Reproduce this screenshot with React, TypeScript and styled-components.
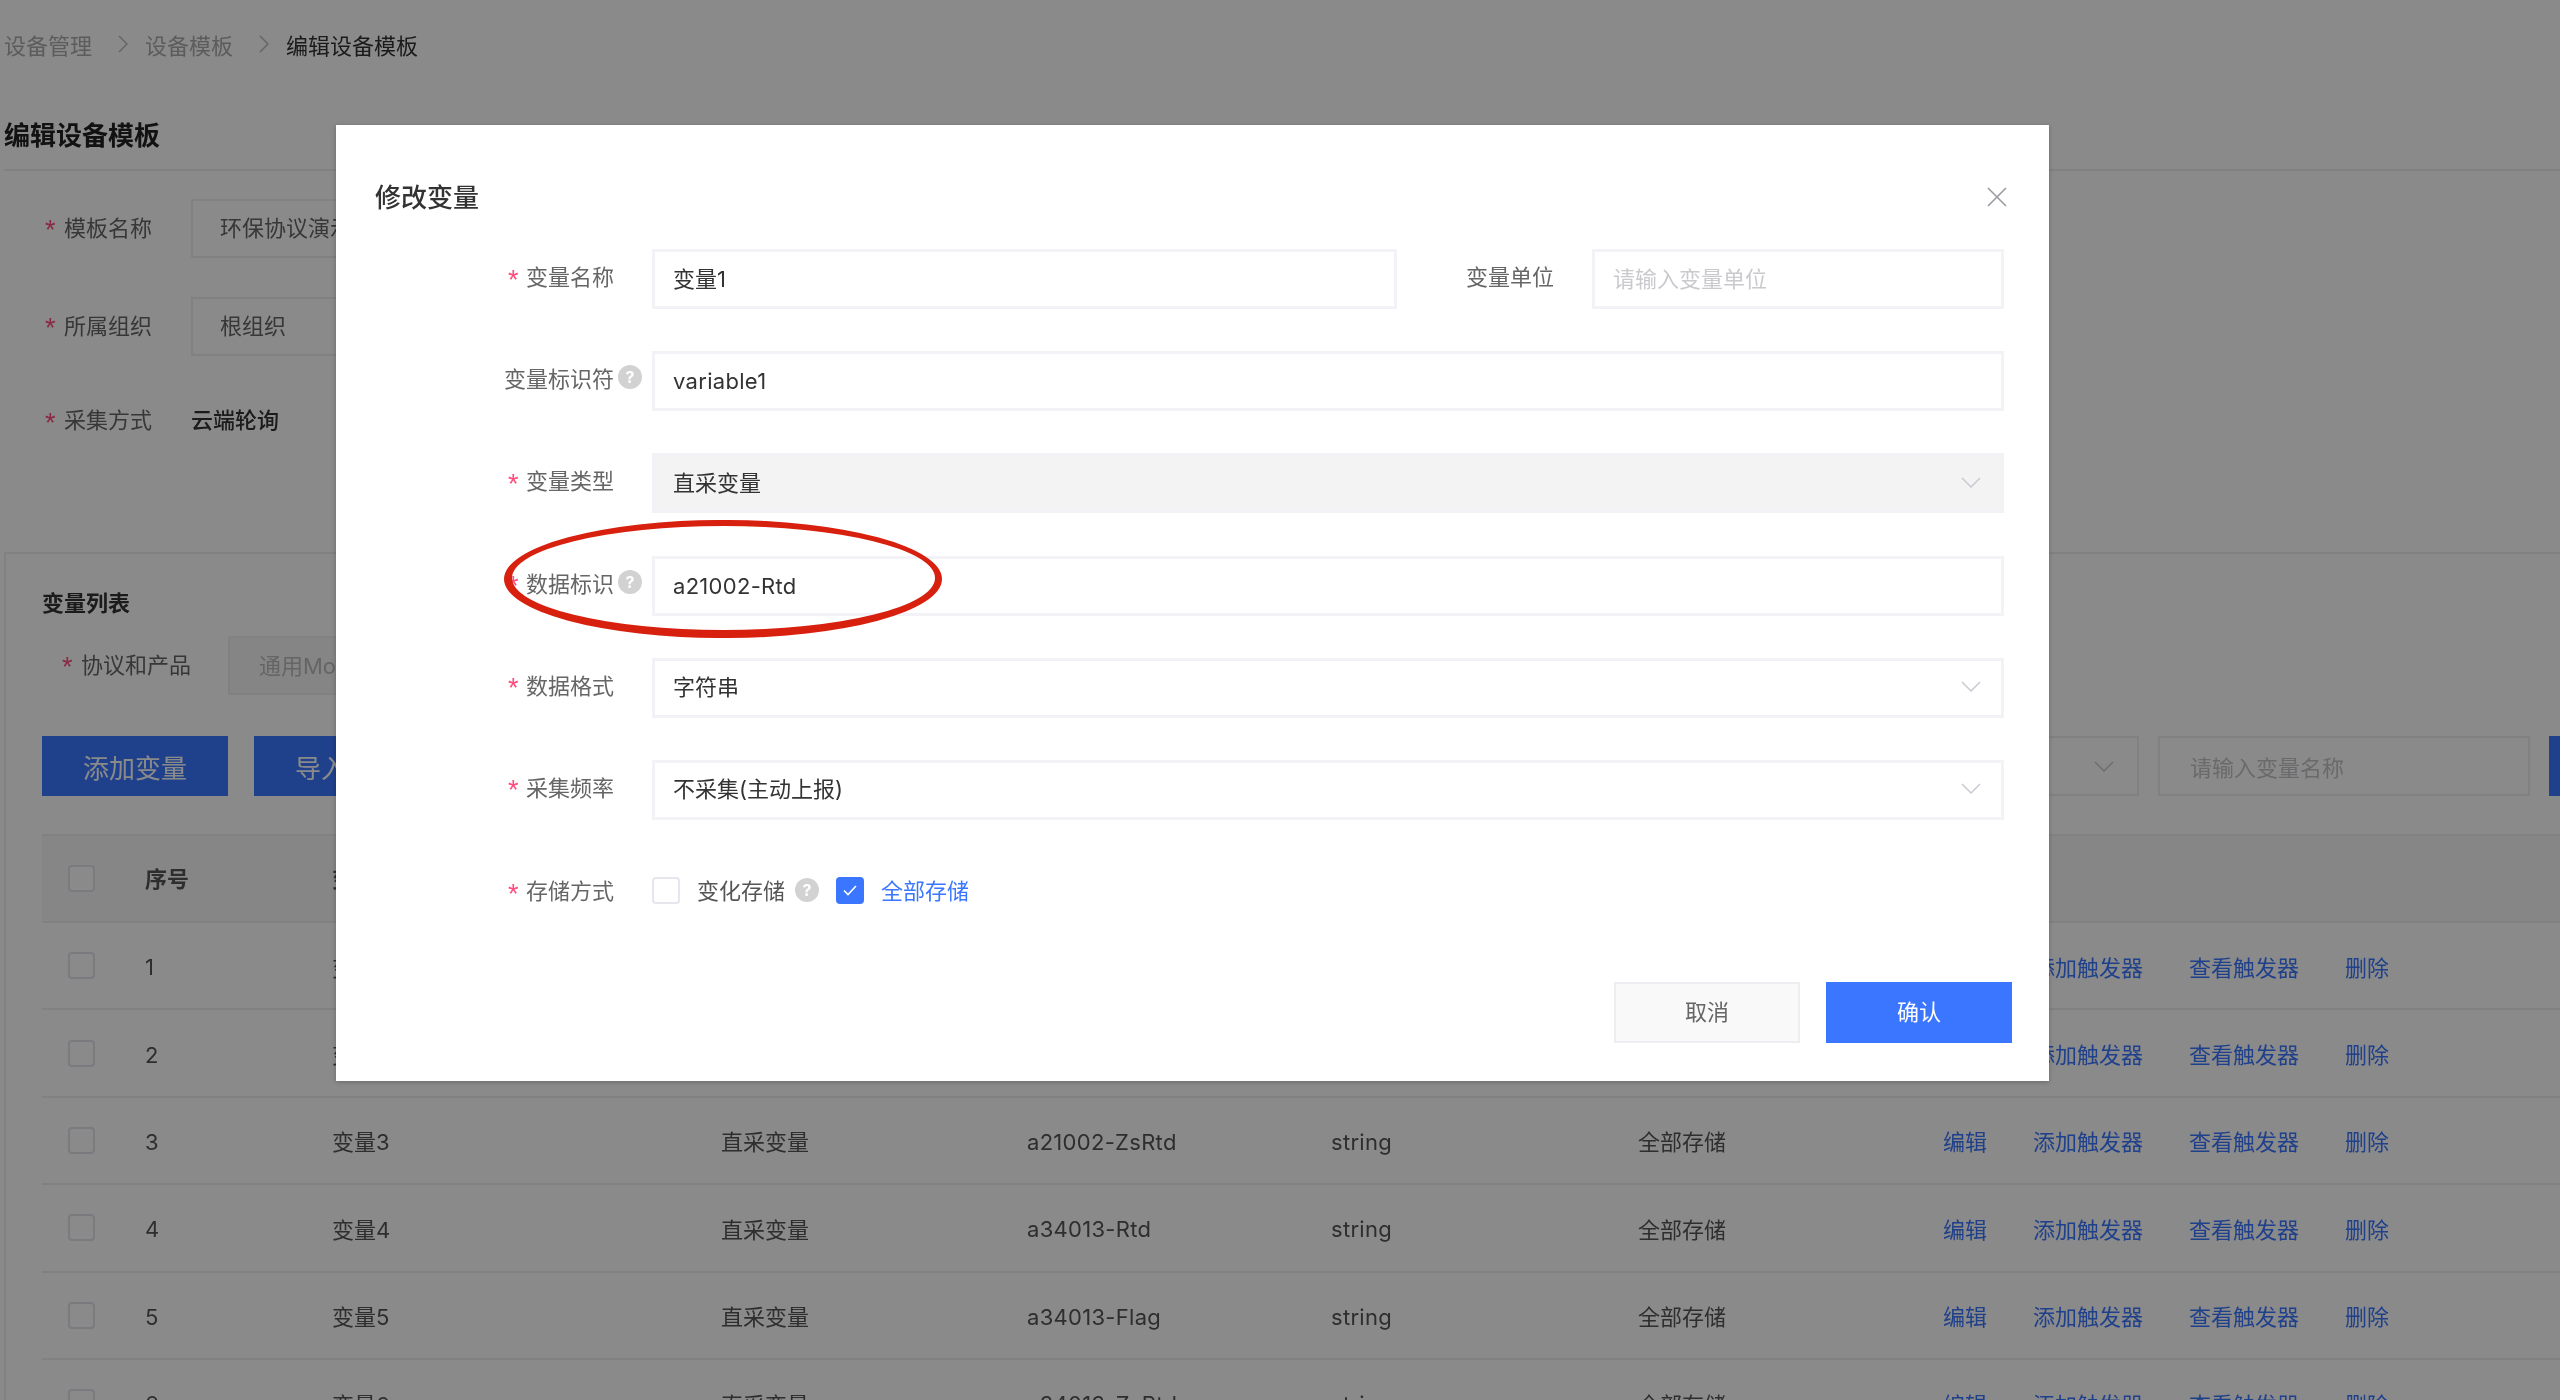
import React from "react";
import styled, { createGlobalStyle } from "styled-components";

const GlobalStyle = createGlobalStyle`
  html, body {
    margin: 0;
    width: 2560px;
    height: 1400px;
    overflow: hidden;
    background: #fff;
    font-family: Inter, "Noto Sans CJK SC", sans-serif;
    font-size: 22px;
    color: #333;
  }
  * {
    box-sizing: border-box;
  }
`;

const BLUE = "#3a76ff";

const Page = styled.div`
  width: 2560px;
  height: 1400px;
  overflow: hidden;
  padding-left: 4px;
  white-space: nowrap;
  filter: blur(0.6px);
`;

const Breadcrumb = styled.div`
  height: 90px;
  padding-bottom: 3px;
  display: flex;
  align-items: center;
  color: #999;
`;

const Crumb = styled.span<{ $current?: boolean }>`
  color: ${(p) => (p.$current ? "#333" : "#aaa")};
`;

const CrumbSep = styled.svg`
  width: 10px;
  height: 18px;
  margin: 0 17px 0 26px;
  fill: none;
  stroke: #bbb;
  stroke-width: 1.5;
`;

const Heading = styled.h1`
  margin: 0;
  height: 81px;
  padding-top: 8px;
  display: flex;
  align-items: center;
  font-size: 26px;
  font-weight: 600;
  color: #222;
  border-bottom: 2px solid #eeeef2;
`;

const BaseForm = styled.div`
  padding: 28px 0 0 41px;
  display: flex;
  flex-direction: column;
  gap: 39px;
`;

const BaseRow = styled.div<{ $short?: boolean }>`
  height: ${(p) => (p.$short ? "52px" : "59px")};
  display: flex;
  align-items: center;
`;

const BaseLabel = styled.div`
  width: 146px;
  padding-bottom: 6px;
  color: #666;
  display: flex;
  align-items: center;
`;

const Star = styled.span`
  width: 19px;
  padding-top: 10px;
  font-family: "Liberation Sans", sans-serif;
  font-size: 27px;
  line-height: 1;
  color: #ff4d7d;
`;

const BaseInput = styled.div`
  width: 520px;
  height: 100%;
  padding: 0 0 6px 27px;
  display: flex;
  align-items: center;
  color: #666;
  border: 2px solid #eeeef2;
`;

const BaseValue = styled.div`
  padding-bottom: 6px;
  font-weight: 500;
  color: #333;
`;

const Panel = styled.section`
  margin-top: 105px;
  height: 900px;
  padding: 34px 0 0 36px;
  border: 2px solid #eeeef2;
  border-right: none;
`;

const PanelTitle = styled.h2`
  margin: 0;
  height: 30px;
  line-height: 30px;
  font-size: 22px;
  font-weight: 600;
  color: #333;
`;

const ProtocolRow = styled.div`
  margin-top: 18px;
  height: 59px;
  padding-left: 20px;
  display: flex;
  align-items: center;
`;

const ProtocolLabel = styled.div`
  width: 166px;
  padding-bottom: 6px;
  color: #666;
  display: flex;
  align-items: center;
`;

const ProtocolInput = styled.div`
  width: 500px;
  height: 100%;
  padding: 0 0 3px 29px;
  display: flex;
  align-items: center;
  color: #bbb;
  background: #f5f5f5;
  border: 2px solid #eeeef2;
`;

const Toolbar = styled.div`
  margin-top: 41px;
  height: 60px;
  display: flex;
`;

const PrimaryButton = styled.button`
  flex: none;
  width: 186px;
  height: 60px;
  margin-right: 26px;
  padding: 0;
  border: none;
  background: ${BLUE};
  color: #fff;
  font: inherit;
  font-size: 26px;
`;

const FilterSelect = styled.div`
  flex: none;
  width: 239px;
  margin-left: 1434px;
  padding-right: 23px;
  display: flex;
  align-items: center;
  justify-content: flex-end;
  border: 2px solid #eeeef2;
`;

const SearchInput = styled.div`
  flex: none;
  width: 372px;
  margin: 0 19px;
  padding-left: 30px;
  display: flex;
  align-items: center;
  color: #c4c4c8;
  border: 2px solid #eeeef2;
`;

const Table = styled.div`
  margin-top: 38px;
  border-top: 2px solid #eeeef2;
`;

const Columns = styled.div<{ $head?: boolean }>`
  height: ${(p) => (p.$head ? "87px" : "87.4px")};
  display: grid;
  grid-template-columns: 103px 187px 389px 306px 304px 307px 305px 1fr;
  align-items: center;
  border-bottom: 2px solid #eeeef2;
  background: ${(p) => (p.$head ? "#f7f7f7" : "transparent")};
  color: #555;
  font-weight: ${(p) => (p.$head ? 600 : 400)};
`;

const HeadCell = styled.div`
  padding-bottom: 4px;
`;

const LatinCell = styled.div`
  padding-top: 3px;
  letter-spacing: 0.3px;
`;

const CheckCell = styled.div`
  padding-left: 26px;
  display: flex;
`;

const TableCheck = styled.span`
  width: 27px;
  height: 27px;
  border: 2px solid #e2e2ea;
  border-radius: 4px;
  background: #fff;
`;

const Actions = styled.div`
  display: flex;
  gap: 46px;
`;

const ActionLink = styled.a`
  color: ${BLUE};
`;

const Mask = styled.div`
  position: fixed;
  inset: 0;
  background: rgba(0, 0, 0, 0.46);
`;

const Modal = styled.div`
  position: fixed;
  left: 336px;
  top: 125px;
  width: 1713px;
  height: 956px;
  background: #fff;
  box-shadow: 0 1px 5px rgba(0, 0, 0, 0.25);
  white-space: nowrap;
  filter: blur(0.5px);
`;

const ModalHeader = styled.div`
  padding: 55px 42px 33px 39px;
  display: flex;
  align-items: center;
  justify-content: space-between;
`;

const ModalTitle = styled.h3`
  margin: 0;
  font-size: 26px;
  line-height: 36px;
  font-weight: 500;
  color: #333;
`;

const CloseIcon = styled.svg`
  width: 20px;
  height: 20px;
  margin-bottom: 3px;
  fill: none;
  stroke: #9a9aa2;
  stroke-width: 1.6;
`;

const ModalForm = styled.div`
  padding-right: 45px;
  display: flex;
  flex-direction: column;
  gap: 42.2px;
`;

const FormRow = styled.div<{ $short?: boolean }>`
  height: ${(p) => (p.$short ? "62px" : "60px")};
  display: flex;
  align-items: center;
`;

const FormLabel = styled.div`
  flex: none;
  width: 316px;
  padding: 0 10px 8px 0;
  display: flex;
  align-items: center;
  justify-content: flex-end;
  color: #666;
`;

const ModalStar = styled.span`
  width: 18px;
  padding-top: 10px;
  font-family: "Liberation Sans", sans-serif;
  font-size: 27px;
  line-height: 1;
  color: #ff4d7d;
`;

const HelpSlot = styled.span`
  width: 28px;
  display: flex;
  justify-content: flex-end;
`;

const Help = styled.span`
  width: 24px;
  height: 24px;
  border-radius: 50%;
  background: #d2d2d2;
  color: #fff;
  font-size: 16px;
  font-weight: 700;
  display: flex;
  align-items: center;
  justify-content: center;
`;

const Field = styled.div<{ $disabled?: boolean; $width?: number; $latin?: boolean }>`
  ${(p) => (p.$width ? `flex: none; width: ${p.$width}px;` : "flex: 1;")}
  height: 60px;
  padding: 0 20px ${(p) => (p.$latin ? "0" : "5px")} 18px;
  display: flex;
  align-items: center;
  justify-content: space-between;
  letter-spacing: ${(p) => (p.$latin ? "0.3px" : "0")};
  color: #333;
  background: ${(p) => (p.$disabled ? "#f3f3f4" : "#fff")};
  border: 3px solid #f2f2f7;
`;

const Placeholder = styled.span`
  color: #cacace;
`;

const UnitLabel = styled.div`
  flex: none;
  width: 88px;
  margin: 0 38px 8px 69px;
  color: #666;
`;

const Chevron = styled.svg`
  width: 20px;
  height: 11px;
  fill: none;
  stroke: #c9c9d2;
  stroke-width: 1.5;
`;

const FieldChevron = styled(Chevron)`
  margin-top: 3px;
`;

const CheckGroup = styled.div`
  padding-bottom: 6px;
  display: flex;
  align-items: center;
`;

const CheckBox = styled.span<{ $checked?: boolean }>`
  width: 28px;
  height: 27px;
  border-radius: 4px;
  display: flex;
  align-items: center;
  justify-content: center;
  background: ${(p) => (p.$checked ? BLUE : "#fff")};
  border: ${(p) => (p.$checked ? "none" : "2px solid #e6e6ee")};
`;

const CheckText = styled.span<{ $checked?: boolean }>`
  margin: 0 10px 2px 17px;
  color: ${(p) => (p.$checked ? BLUE : "#555")};
`;

const HelpGap = styled.span`
  margin-right: 17px;
  display: flex;
`;

const ModalFooter = styled.div`
  margin-top: 58px;
  padding-right: 37px;
  display: flex;
  justify-content: flex-end;
  gap: 26px;
`;

const FooterButton = styled.button<{ $primary?: boolean }>`
  width: 186px;
  height: 61px;
  padding: 0 0 5px;
  font: inherit;
  color: ${(p) => (p.$primary ? "#fff" : "#666")};
  background: ${(p) => (p.$primary ? BLUE : "#f9f9f9")};
  border: ${(p) => (p.$primary ? "none" : "2px solid #eeeef2")};
`;

const Annotation = styled.svg`
  position: absolute;
  left: 168px;
  top: 395px;
  width: 438px;
  height: 118px;
  fill: #d8200f;
  fill-rule: evenodd;
`;

type Row = { no: number; id: string };

const rows: Row[] = [
  { no: 1, id: "a21002-Rtd" },
  { no: 2, id: "a21002-Flag" },
  { no: 3, id: "a21002-ZsRtd" },
  { no: 4, id: "a34013-Rtd" },
  { no: 5, id: "a34013-Flag" },
  { no: 6, id: "a34013-ZsRtd" },
];

const ChevronDown = () => (
  <Chevron viewBox="0 0 20 11">
    <polyline points="1,1 10,10 19,1" />
  </Chevron>
);

const SelectChevron = () => (
  <FieldChevron viewBox="0 0 20 11">
    <polyline points="1,1 10,10 19,1" />
  </FieldChevron>
);

const App = () => {
  return (
    <>
      <GlobalStyle />
      <Page>
        <Breadcrumb>
          <Crumb>设备管理</Crumb>
          <CrumbSep viewBox="0 0 10 18">
            <polyline points="1,1 9,9 1,17" />
          </CrumbSep>
          <Crumb>设备模板</Crumb>
          <CrumbSep viewBox="0 0 10 18">
            <polyline points="1,1 9,9 1,17" />
          </CrumbSep>
          <Crumb $current>编辑设备模板</Crumb>
        </Breadcrumb>
        <Heading>编辑设备模板</Heading>
        <BaseForm>
          <BaseRow>
            <BaseLabel>
              <Star>*</Star>模板名称
            </BaseLabel>
            <BaseInput>环保协议演示模板</BaseInput>
          </BaseRow>
          <BaseRow>
            <BaseLabel>
              <Star>*</Star>所属组织
            </BaseLabel>
            <BaseInput>根组织</BaseInput>
          </BaseRow>
          <BaseRow $short>
            <BaseLabel>
              <Star>*</Star>采集方式
            </BaseLabel>
            <BaseValue>云端轮询</BaseValue>
          </BaseRow>
        </BaseForm>
        <Panel>
          <PanelTitle>变量列表</PanelTitle>
          <ProtocolRow>
            <ProtocolLabel>
              <Star>*</Star>协议和产品
            </ProtocolLabel>
            <ProtocolInput>通用Modbus协议</ProtocolInput>
          </ProtocolRow>
          <Toolbar>
            <PrimaryButton>添加变量</PrimaryButton>
            <PrimaryButton>导入变量</PrimaryButton>
            <FilterSelect>
              <ChevronDown />
            </FilterSelect>
            <SearchInput>请输入变量名称</SearchInput>
            <PrimaryButton>查询</PrimaryButton>
          </Toolbar>
          <Table>
            <Columns $head>
              <CheckCell>
                <TableCheck />
              </CheckCell>
              <HeadCell>序号</HeadCell>
              <HeadCell>变量名称</HeadCell>
              <HeadCell>变量类型</HeadCell>
              <HeadCell>数据标识</HeadCell>
              <HeadCell>数据格式</HeadCell>
              <HeadCell>存储方式</HeadCell>
              <HeadCell>操作</HeadCell>
            </Columns>
            {rows.map((row) => (
              <Columns key={row.no}>
                <CheckCell>
                  <TableCheck />
                </CheckCell>
                <LatinCell>{row.no}</LatinCell>
                <div>变量{row.no}</div>
                <div>直采变量</div>
                <LatinCell>{row.id}</LatinCell>
                <LatinCell>string</LatinCell>
                <div>全部存储</div>
                <Actions>
                  <ActionLink>编辑</ActionLink>
                  <ActionLink>添加触发器</ActionLink>
                  <ActionLink>查看触发器</ActionLink>
                  <ActionLink>删除</ActionLink>
                </Actions>
              </Columns>
            ))}
          </Table>
        </Panel>
      </Page>
      <Mask />
      <Modal>
        <ModalHeader>
          <ModalTitle>修改变量</ModalTitle>
          <CloseIcon viewBox="0 0 20 20">
            <path d="M1 1 L19 19 M19 1 L1 19" />
          </CloseIcon>
        </ModalHeader>
        <ModalForm>
          <FormRow>
            <FormLabel>
              <ModalStar>*</ModalStar>变量名称
              <HelpSlot />
            </FormLabel>
            <Field $width={745}>变量1</Field>
            <UnitLabel>变量单位</UnitLabel>
            <Field>
              <Placeholder>请输入变量单位</Placeholder>
            </Field>
          </FormRow>
          <FormRow>
            <FormLabel>
              变量标识符
              <HelpSlot>
                <Help>?</Help>
              </HelpSlot>
            </FormLabel>
            <Field $latin>variable1</Field>
          </FormRow>
          <FormRow>
            <FormLabel>
              <ModalStar>*</ModalStar>变量类型
              <HelpSlot />
            </FormLabel>
            <Field $disabled>
              直采变量
              <SelectChevron />
            </Field>
          </FormRow>
          <FormRow>
            <FormLabel>
              <ModalStar>*</ModalStar>数据标识
              <HelpSlot>
                <Help>?</Help>
              </HelpSlot>
            </FormLabel>
            <Field $latin>a21002-Rtd</Field>
          </FormRow>
          <FormRow>
            <FormLabel>
              <ModalStar>*</ModalStar>数据格式
              <HelpSlot />
            </FormLabel>
            <Field>
              字符串
              <SelectChevron />
            </Field>
          </FormRow>
          <FormRow>
            <FormLabel>
              <ModalStar>*</ModalStar>采集频率
              <HelpSlot />
            </FormLabel>
            <Field>
              不采集(主动上报)
              <SelectChevron />
            </Field>
          </FormRow>
          <FormRow $short>
            <FormLabel>
              <ModalStar>*</ModalStar>存储方式
              <HelpSlot />
            </FormLabel>
            <CheckGroup>
              <CheckBox />
              <CheckText>变化存储</CheckText>
              <HelpGap>
                <Help>?</Help>
              </HelpGap>
              <CheckBox $checked>
                <svg width="14" height="11" viewBox="0 0 14 11" fill="none" stroke="#fff" strokeWidth="1.6">
                  <polyline points="1,5.5 5,9.5 13,1" />
                </svg>
              </CheckBox>
              <CheckText $checked>全部存储</CheckText>
            </CheckGroup>
          </FormRow>
        </ModalForm>
        <ModalFooter>
          <FooterButton>取消</FooterButton>
          <FooterButton $primary>确认</FooterButton>
        </ModalFooter>
        <Annotation viewBox="0 0 438 118">
          <path d="M0 59 A219 59 0 1 1 438 59 A219 59 0 1 1 0 59 Z M8 58 A211.5 52 0 1 0 431 58 A211.5 52 0 1 0 8 58 Z" />
        </Annotation>
      </Modal>
    </>
  );
};

export default App;
